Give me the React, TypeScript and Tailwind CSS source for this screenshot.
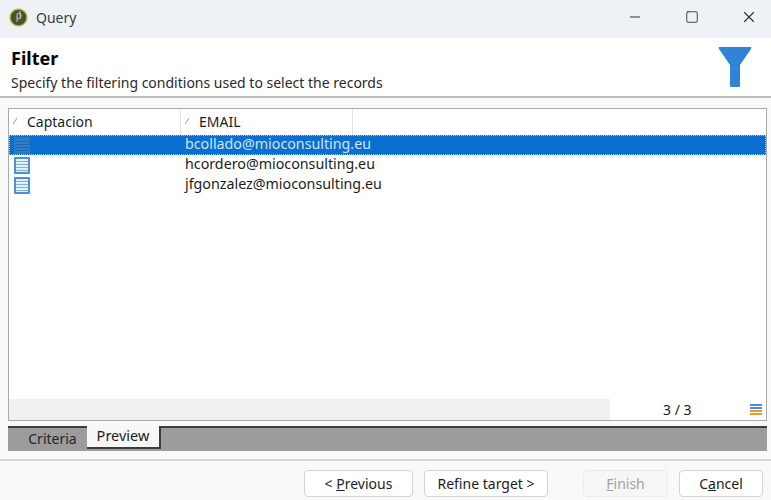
import { Minus, Square, X } from 'lucide-react';

function RowIcon({ selected }: { selected?: boolean }) {
  return (
    <svg width="16" height="17" viewBox="0 0 16 17" className="shrink-0">
      <rect x="0" y="0" width="16" height="17" rx="1" fill={selected ? '#2a78c2' : '#4a90d9'} />
      <rect x="2" y="2" width="12" height="13" fill={selected ? '#2f7fca' : '#e6f0fa'} />
      {[4, 7, 10, 13].map((y) => (
        <rect key={y} x="2" y={y} width="12" height="1" fill={selected ? '#1766b4' : '#7db1e6'} />
      ))}
    </svg>
  );
}

function SortMark() {
  return (
    <svg width="6" height="8" viewBox="0 0 6 8" className="shrink-0">
      <path d="M1 7L5 1" stroke="#9a9a9a" strokeWidth="1" fill="none" />
    </svg>
  );
}

function Row({ email, selected }: { email: string; selected?: boolean }) {
  return (
    <div
      className={
        selected
          ? 'flex h-[20px] items-center bg-[#0a6fd0] text-[#cfe4f8] outline-1 -outline-offset-1 outline-dotted outline-[#9cc4ea]'
          : 'flex h-[20px] items-center text-[#1c1c1c]'
      }
    >
      <div className="flex w-[176px] shrink-0 pl-[5px]">
        <RowIcon selected={selected} />
      </div>
      <span className="pb-[1px] text-[14.25px] leading-none">{email}</span>
    </div>
  );
}

function Button({ children, width, disabled }: { children: React.ReactNode; width: string; disabled?: boolean }) {
  return (
    <button
      className={
        disabled
          ? `flex h-[27px] items-center justify-center rounded-[4px] border border-[#ececec] bg-[#f6f6f6] text-[#a2a2a2] ${width}`
          : `flex h-[27px] items-center justify-center rounded-[4px] border border-[#d4d4d4] bg-white text-[#1c1c1c] ${width}`
      }
    >
      {children}
    </button>
  );
}

export default function App() {
  return (
    <div className="flex h-[500px] w-[771px] flex-col overflow-hidden bg-[#f9f9f9] font-['Noto_Sans','Open_Sans',sans-serif] text-[14px] text-[#1c1c1c]">
      <div className="flex h-[38px] shrink-0 items-center bg-[#eef2f7] pb-[4px] pl-[9px]">
        <svg width="19" height="19" viewBox="0 0 19 19" className="shrink-0">
          <circle cx="9.5" cy="9.5" r="8.5" fill="#4c4f36" stroke="#b9c23f" strokeWidth="1.4" />
          <path d="M8 14V7a2 2 0 0 1 4 0v2a2 2 0 0 1-4 0M11 3v7" stroke="#c9ccb0" strokeWidth="1" fill="none" />
        </svg>
        <span className="ml-[8px] text-[#3a3a3a]">Query</span>
        <div className="ml-auto flex items-center gap-[13px] text-[#2e2e2e]">
          <div className="flex w-[44px] justify-center">
            <Minus size={16} strokeWidth={1.5} />
          </div>
          <div className="flex w-[44px] justify-center">
            <Square size={14} strokeWidth={1.5} />
          </div>
          <div className="flex w-[44px] justify-center">
            <X size={18} strokeWidth={1.5} />
          </div>
        </div>
      </div>

      <div className="flex h-[60px] shrink-0 justify-between border-b-2 border-[#bdbdbd] bg-white pl-[11px] pr-[19px]">
        <div className="pt-[7px]">
          <div className="text-[18px] leading-[26px] font-bold text-black">Filter</div>
          <div className="mt-[2px] text-[14px] leading-[20px] text-[#2a2a2a]">
            Specify the filtering conditions used to select the records
          </div>
        </div>
        <svg width="34" height="40" viewBox="0 0 34 40" className="mt-[9px]">
          <path
            d="M1.5 0H32.5Q34 0 33 2L22 18V38.5Q22 40 20.5 40H13.5Q12 40 12 38.5V18L1 2Q0 0 1.5 0Z"
            fill="#2f84d6"
          />
        </svg>
      </div>

      <div className="ml-[8px] mr-[4px] mt-[10px] flex h-[313px] shrink-0 flex-col border border-[#a9a9a9] bg-white">
        <div className="flex h-[26px] shrink-0 items-center">
          <div className="flex h-full w-[172px] items-center gap-[9px] border-r border-[#e3e3e3] pb-[2px] pl-[3px]">
            <SortMark />
            <span>Captacion</span>
          </div>
          <div className="flex h-full w-[172px] items-center gap-[9px] border-r border-[#e3e3e3] pb-[2px] pl-[3px]">
            <SortMark />
            <span>EMAIL</span>
          </div>
        </div>
        <Row email="bcollado@mioconsulting.eu" selected />
        <Row email="hcordero@mioconsulting.eu" />
        <Row email="jfgonzalez@mioconsulting.eu" />
        <div className="mt-auto flex h-[21px] shrink-0">
          <div className="w-[601px] bg-[#f0f0f0]" />
          <div className="flex flex-1 items-center bg-white pr-[4px]">
            <span className="ml-[53px]">3 / 3</span>
            <svg width="12" height="12" viewBox="0 0 12 12" className="ml-auto">
              <rect y="0" width="12" height="2" fill="#4a90d9" />
              <rect y="3" width="12" height="2" fill="#4a90d9" />
              <rect y="6" width="12" height="2" fill="#e79b2e" />
              <rect y="9" width="12" height="2" fill="#e79b2e" />
            </svg>
          </div>
        </div>
      </div>

      <div className="ml-[8px] mr-[4px] mt-[5px] flex h-[25px] shrink-0 border-t-2 border-[#3c3c3c] bg-[#9c9c9c]">
        <div className="flex h-[20px] w-[79px] items-center justify-center pl-[10px] text-[#262626]">Criteria</div>
        <div className="-mt-[2px] flex h-[23px] w-[74px] items-center justify-center border-r-2 border-b-2 border-[#3c3c3c] bg-[#f7f7f7] pb-[1px] text-[14.5px]">
          Preview
        </div>
      </div>

      <div className="mt-[8px] flex flex-1 items-start justify-end border-t-2 border-[#d6d6d6] pt-[9px] pr-[8px]">
        <Button width="w-[109px]">
          <span>
            &lt; <span className="underline">P</span>revious
          </span>
        </Button>
        <div className="ml-[11px]">
          <Button width="w-[124px]">Refine target &gt;</Button>
        </div>
        <div className="ml-[35px]">
          <Button width="w-[85px]" disabled>
            <span>
              <span className="underline">F</span>inish
            </span>
          </Button>
        </div>
        <div className="ml-[11px]">
          <Button width="w-[84px]">
            <span>
              C<span className="underline">a</span>ncel
            </span>
          </Button>
        </div>
      </div>
    </div>
  );
}
